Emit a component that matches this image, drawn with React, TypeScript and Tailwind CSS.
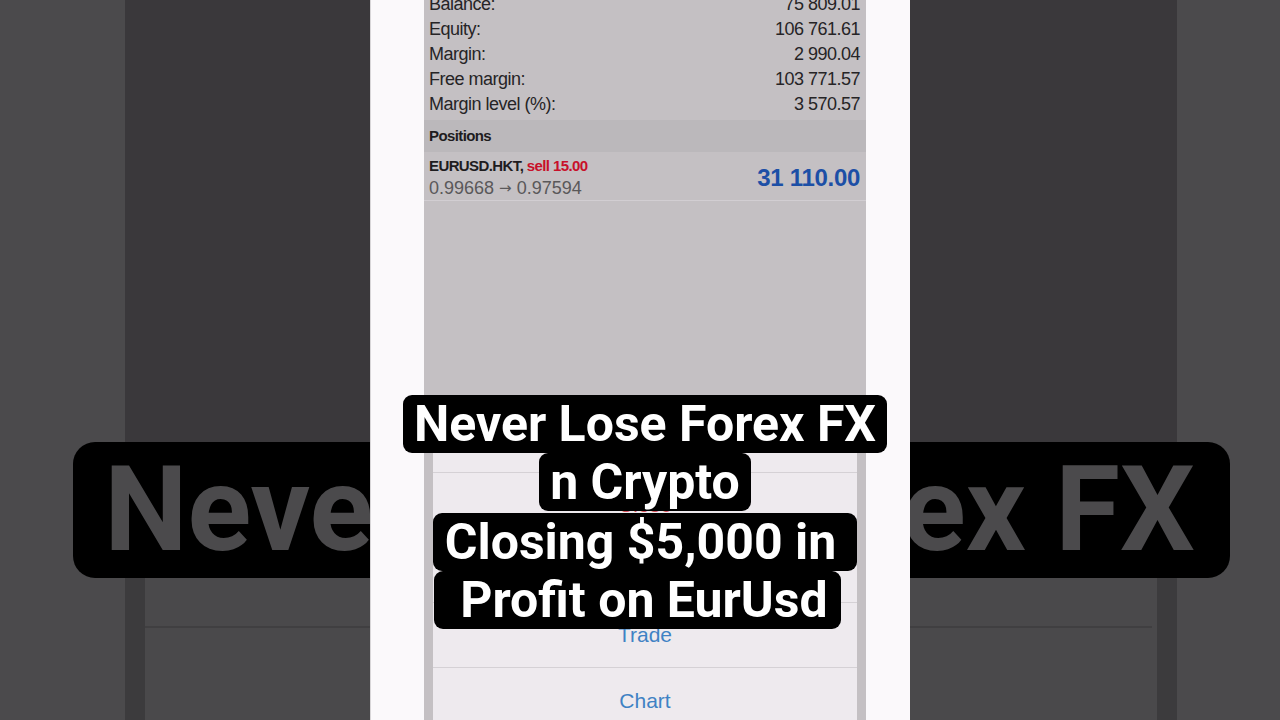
import React from "react";

const rows: [string, string][] = [
  ["Balance:", "75 809.01"],
  ["Equity:", "106 761.61"],
  ["Margin:", "2 990.04"],
  ["Free margin:", "103 771.57"],
  ["Margin level (%):", "3 570.57"],
];

function LeftCol() {
  return (
    <div className="w-[245px] shrink-0 flex flex-col">
      <div className="h-[578px] bg-[#3a383b]" />
      <div className="flex-1 flex">
        <div className="w-[20px] bg-[#3c3b3d]" />
        <div className="flex-1 bg-[#4a494b] flex flex-col pt-[48px]">
          <div className="h-[2px] bg-[#403f41]" />
        </div>
      </div>
    </div>
  );
}

function RightCol() {
  return (
    <div className="w-[267px] shrink-0 flex flex-col">
      <div className="h-[578px] bg-[#3a383b]" />
      <div className="flex-1 flex">
        <div className="flex-1 bg-[#4a494b] flex flex-col pt-[48px] pr-[5px]">
          <div className="h-[2px] bg-[#403f41]" />
        </div>
        <div className="w-[20px] bg-[#3c3b3d]" />
      </div>
    </div>
  );
}

function Phone() {
  return (
    <div className="relative z-10 w-[540px] shrink-0 bg-[#fbf9fb] flex pl-[53px] pr-[44px] border-l border-[#d8d6d8]">
      <div className="flex-1 bg-[#c4c0c3] flex flex-col overflow-hidden" style={{ fontFamily: '"Liberation Sans", Arial, sans-serif' }}>
        <div className="mt-[-8px] flex flex-col">
          {rows.map(([l, v]) => (
            <div key={l} className="h-[25px] leading-[25px] flex justify-between pl-[5px] pr-[6px] text-[18px] tracking-[-0.5px] text-[#262426]">
              <span>{l}</span>
              <span>{v}</span>
            </div>
          ))}
        </div>
        <div className="mt-[3px] h-[32px] leading-[32px] bg-[#bbb8bb] pl-[5px] text-[15px] font-bold tracking-[-0.6px] text-[#1e1c1e]">
          Positions
        </div>
        <div className="h-[53px] border-b border-[#d2ced2] flex justify-between items-center pl-[5px] pr-[6px]">
          <div className="flex flex-col self-start pt-[4px]">
            <div className="h-[20px] leading-[20px] text-[15px] font-bold tracking-[-0.6px] text-[#1e1c1e]">
              EURUSD.HKT, <span className="text-[#c8102a]">sell 15.00</span>
            </div>
            <div className="h-[24px] leading-[24px] text-[18px] text-[#5a585a] flex items-center">
              <span>0.99668</span>
              <span className="mx-[5px] text-[15px]" style={{ fontFamily: '"DejaVu Sans", sans-serif' }}>→</span>
              <span>0.97594</span>
            </div>
          </div>
          <div className="pt-[4px] text-[24px] font-bold text-[#1c4fa6] tracking-[-0.3px]">31 110.00</div>
        </div>
        <div className="mt-[207px] mx-[9px] bg-[#eeeaee] rounded-t-[12px] flex flex-col text-[21px]">
          <div className="h-[65px] border-b border-[#d5d1d5] flex items-center justify-center text-[13px] text-[#8a878a]">
            EURUSD.HKT, sell 15.00
          </div>
          <div className="h-[65px] border-b border-[#d5d1d5] flex items-center justify-center text-[#d9505b]">Close</div>
          <div className="h-[65px] border-b border-[#d5d1d5] flex items-center justify-center text-[#3f82c4]">Modify</div>
          <div className="h-[65px] border-b border-[#d5d1d5] flex items-center justify-center text-[#3f82c4]">Trade</div>
          <div className="h-[65px] flex items-center justify-center text-[#3f82c4]">Chart</div>
        </div>
      </div>
    </div>
  );
}

export default function App() {
  return (
    <div className="relative w-[1280px] h-[720px] overflow-hidden bg-[#4b4a4c] flex">
      <div className="w-[125px] shrink-0" />
      <LeftCol />
      <Phone />
      <RightCol />
      <div className="w-[103px] shrink-0" />

      <div
        className="absolute left-[73px] top-[442px] w-[1157px] h-[136px] bg-black rounded-[22px] flex justify-center pr-[4px] text-[118px] leading-[136px] font-bold text-[#4b4a4c] whitespace-nowrap"
        style={{ fontFamily: 'Roboto, "Liberation Sans", sans-serif' }}
      >
        Never Lose Forex FX
      </div>

      <div
        className="absolute left-0 right-0 top-[395px] z-20 flex flex-col items-center pl-[10px] text-[50px] font-bold text-white"
        style={{ fontFamily: 'Roboto, "Liberation Sans", sans-serif' }}
      >
        <div className="h-[58px] leading-[58px] bg-black rounded-[9px] px-[11px] whitespace-pre">Never Lose Forex FX</div>
        <div className="h-[58px] leading-[58px] bg-black rounded-[9px] px-[11px] whitespace-pre">n Crypto</div>
        <div className="h-[2px]" />
        <div className="h-[58px] leading-[58px] bg-black rounded-[9px] pl-[12px] pr-[21px] whitespace-pre">Closing $5,000 in</div>
        <div className="h-[58px] leading-[58px] bg-black rounded-[9px] pl-[26px] pr-[13px] mr-[15px] whitespace-pre">Profit on EurUsd</div>
      </div>
    </div>
  );
}
